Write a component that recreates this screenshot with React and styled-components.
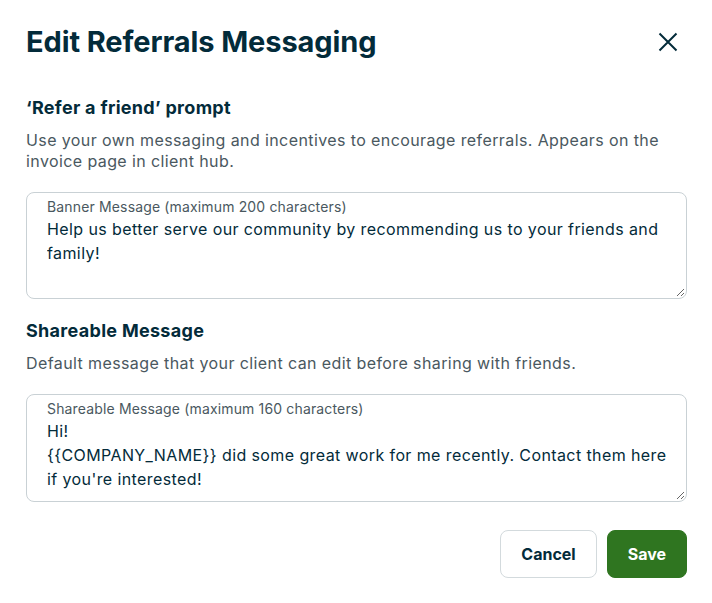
import React from 'react';
import styled, { createGlobalStyle } from 'styled-components';

const GlobalStyle = createGlobalStyle`
  html, body {
    margin: 0;
    padding: 0;
    background: #ffffff;
  }
  body {
    font-family: Inter, "Noto Sans", sans-serif;
    color: #032b3a;
  }
`;

const Dialog = styled.div`
  width: 712px;
  box-sizing: border-box;
  padding: 25px 25px 24px 26px;
  display: flex;
  flex-direction: column;
`;

const Header = styled.div`
  display: flex;
  align-items: center;
  justify-content: space-between;
  height: 34px;
`;

const Title = styled.h1`
  margin: 0;
  font-size: 29px;
  line-height: 34px;
  font-weight: 700;
  letter-spacing: -0.1px;
  color: #032b3a;
`;

const CloseButton = styled.button`
  border: none;
  background: none;
  padding: 0;
  width: 24px;
  height: 24px;
  margin-right: 7px;
  display: flex;
  align-items: center;
  justify-content: center;
  cursor: pointer;
  color: #032b3a;
`;

const SectionTitle = styled.h2`
  margin: ${(p) => (p.$first ? '37px' : '20px')} 0 0;
  font-size: 18px;
  line-height: 24px;
  font-weight: 700;
  letter-spacing: 0.3px;
  color: #032b3a;
`;

const Description = styled.p`
  margin: 10px 0 0;
  font-size: 16px;
  line-height: 21px;
  letter-spacing: 0.4px;
  color: #4a5860;
`;

const Field = styled.div`
  margin-top: 20px;
  border: 1px solid #c9d1d5;
  border-radius: 8px;
  padding: 4px 1px 1px 20px;
  display: flex;
  flex-direction: column;
`;

const FieldLabel = styled.label`
  font-size: 14px;
  line-height: 20px;
  letter-spacing: 0.15px;
  color: #4a5860;
`;

const TextArea = styled.textarea`
  border: none;
  outline: none;
  resize: vertical;
  padding: 0 8px 8px 0;
  margin: 0;
  height: ${(p) => p.$height}px;
  box-sizing: border-box;
  font-family: Inter, "Noto Sans", sans-serif;
  font-size: 16px;
  line-height: 24px;
  letter-spacing: 0.4px;
  color: #032b3a;
  background: transparent;
`;

const Actions = styled.div`
  margin-top: 28px;
  display: flex;
  justify-content: flex-end;
  gap: 10px;
`;

const Button = styled.button`
  height: 48px;
  box-sizing: border-box;
  padding: 0 20px;
  border-radius: 8px;
  font-family: Inter, "Noto Sans", sans-serif;
  font-size: 16px;
  font-weight: 700;
  cursor: pointer;
  border: 1px solid ${(p) => (p.$primary ? '#2f7520' : '#d3dadd')};
  background: ${(p) => (p.$primary ? '#2f7520' : '#ffffff')};
  color: ${(p) => (p.$primary ? '#ffffff' : '#032b3a')};
`;

const CloseIcon = () => (
  <svg width="24" height="24" viewBox="0 0 24 24" fill="none">
    <path d="M3.5 3.5 L20.5 20.5 M20.5 3.5 L3.5 20.5" stroke="currentColor" strokeWidth="2" />
  </svg>
);

export default function App() {
  return (
    <>
      <GlobalStyle />
      <Dialog>
        <Header>
          <Title>Edit Referrals Messaging</Title>
          <CloseButton aria-label="Close">
            <CloseIcon />
          </CloseButton>
        </Header>

        <SectionTitle $first>‘Refer a friend’ prompt</SectionTitle>
        <Description>
          Use your own messaging and incentives to encourage referrals. Appears on the invoice page in client hub.
        </Description>
        <Field>
          <FieldLabel>Banner Message (maximum 200 characters)</FieldLabel>
          <TextArea
            $height={80}
            defaultValue="Help us better serve our community by recommending us to your friends and family!"
          />
        </Field>

        <SectionTitle>Shareable Message</SectionTitle>
        <Description>Default message that your client can edit before sharing with friends.</Description>
        <Field>
          <FieldLabel>Shareable Message (maximum 160 characters)</FieldLabel>
          <TextArea
            $height={81}
            defaultValue={"Hi!\n{{COMPANY_NAME}} did some great work for me recently. Contact them here if you're interested!"}
          />
        </Field>

        <Actions>
          <Button>Cancel</Button>
          <Button $primary>Save</Button>
        </Actions>
      </Dialog>
    </>
  );
}
